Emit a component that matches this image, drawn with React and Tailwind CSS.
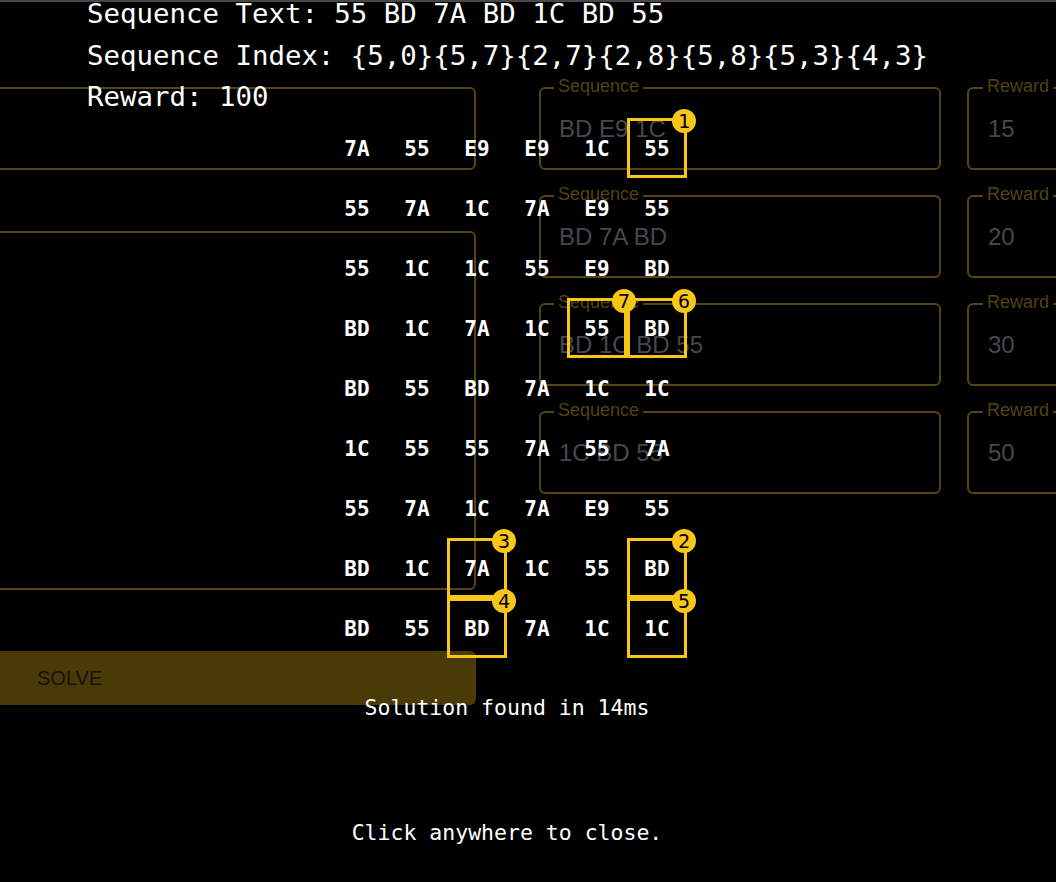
import React from "react"

const mono = { fontFamily: '"DejaVu Sans Mono", "Liberation Mono", monospace' }

const matrix = [
    ["7A", "55", "E9", "E9", "1C", "55"],
    ["55", "7A", "1C", "7A", "E9", "55"],
    ["55", "1C", "1C", "55", "E9", "BD"],
    ["BD", "1C", "7A", "1C", "55", "BD"],
    ["BD", "55", "BD", "7A", "1C", "1C"],
    ["1C", "55", "55", "7A", "55", "7A"],
    ["55", "7A", "1C", "7A", "E9", "55"],
    ["BD", "1C", "7A", "1C", "55", "BD"],
    ["BD", "55", "BD", "7A", "1C", "1C"],
]

// solution path as {col,row}
const path = [
    [5, 0], [5, 7], [2, 7], [2, 8], [5, 8], [5, 3], [4, 3],
]

const sequences = [
    { seq: "BD E9 1C", reward: "15" },
    { seq: "BD 7A BD", reward: "20" },
    { seq: "BD 1C BD 55", reward: "30" },
    { seq: "1C BD 55", reward: "50" },
]

function Field({ label, value, labelLeft }) {
    return (
        <div className="relative h-[83px] rounded-md border-2 border-[#554611]">
            <span
                className="absolute -top-[14px] bg-black px-[4px] text-[18px] leading-[22px] text-[#514310]"
                style={{ left: labelLeft }}
            >
                {label}
            </span>
            <div className="pt-[26px] text-[24px] leading-[28px] text-[#45494e]" style={{ paddingLeft: labelLeft + 5 }}>
                {value}
            </div>
        </div>
    )
}

function stepAt(col, row) {
    const i = path.findIndex(([c, r]) => c === col && r === row)
    return i === -1 ? null : i + 1
}

export default function App() {
    return (
        <div
            className="relative h-[882px] w-[1056px] overflow-hidden bg-black"
            style={{ fontFamily: '"Liberation Sans", Arial, sans-serif' }}
        >
            <div className="h-[2px] bg-[#474747]" />

            {/* dimmed form underneath */}
            <div className="flex pt-[85px]">
                <div className="-ml-5 flex w-[496px] shrink-0 flex-col gap-[61px]">
                    <div className="h-[83px] rounded-md border-2 border-[#554611]" />
                    <div className="h-[359px] rounded-md border-2 border-[#554611]" />
                    <div className="flex h-[54px] items-center rounded-md bg-[#4a3a08] pl-[57px] text-[20px] text-[#17130a]">
                        SOLVE
                    </div>
                </div>

                <div className="ml-[63px] flex w-[402px] shrink-0 flex-col gap-[25px]">
                    {sequences.map((s, i) => (
                        <Field key={i} label="Sequence" value={s.seq} labelLeft={13} />
                    ))}
                </div>

                <div className="ml-[26px] flex w-[120px] shrink-0 flex-col gap-[25px]">
                    {sequences.map((s, i) => (
                        <Field key={i} label="Reward" value={s.reward} labelLeft={14} />
                    ))}
                </div>
            </div>

            {/* result overlay */}
            <div className="absolute inset-0 text-white" style={mono}>
                <div className="-mt-[7px] h-[125px] whitespace-nowrap pl-[87px] text-[27.4px] leading-[41.5px]">
                    <div>Sequence Text: 55 BD 7A BD 1C BD 55</div>
                    <div>Sequence Index: {"{5,0}{5,7}{2,7}{2,8}{5,8}{5,3}{4,3}"}</div>
                    <div>Reward: 100</div>
                </div>

                <div className="ml-[327px] grid w-[360px] grid-cols-6">
                    {matrix.map((row, r) =>
                        row.map((cell, c) => {
                            const step = stepAt(c, r)
                            return (
                                <div key={r + "-" + c} className="relative flex h-[60px] items-center justify-center pt-[3px] text-[21px] font-bold">
                                    {step && (
                                        <>
                                            <div className="absolute inset-0 border-[3px] border-[#f7c619]" />
                                            <div className="absolute -right-[9px] -top-[9px] z-10 flex h-[24px] w-[24px] items-center justify-center rounded-full bg-[#f7c619] text-[20px] font-normal leading-none text-black">
                                                {step}
                                            </div>
                                        </>
                                    )}
                                    <span className="relative">{cell}</span>
                                </div>
                            )
                        })
                    )}
                </div>

                <div className="ml-[327px] w-[360px] whitespace-nowrap text-center text-[21.5px] leading-[28px]">
                    <div className="mt-[36px] flex justify-center">Solution found in 14ms</div>
                    <div className="mt-[97px] flex justify-center">Click anywhere to close.</div>
                </div>
            </div>
        </div>
    )
}
